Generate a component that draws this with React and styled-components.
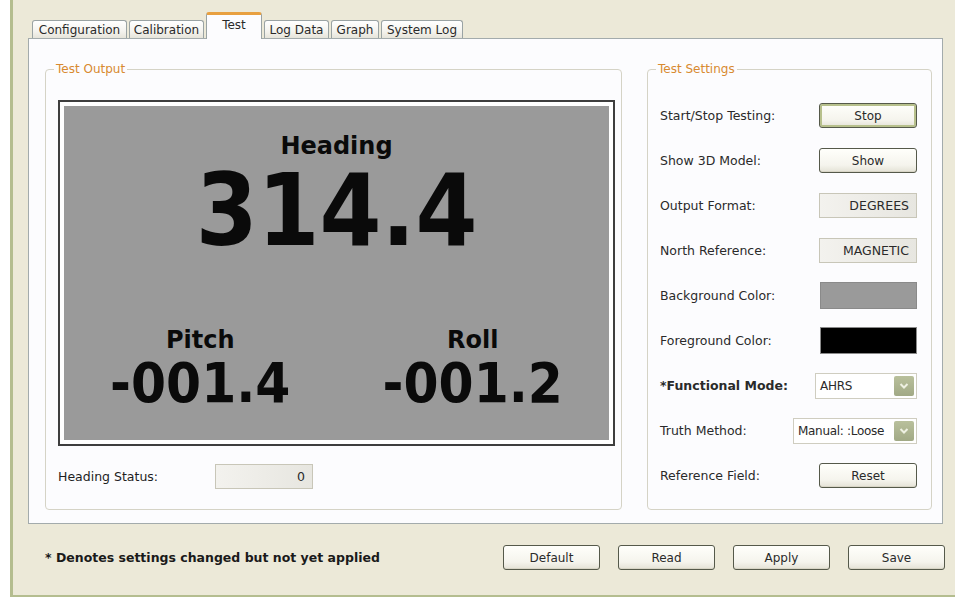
import React from "react";
import styled, { createGlobalStyle } from "styled-components";

const GlobalStyle = createGlobalStyle`
  html, body { margin: 0; padding: 0; background: #ffffff; }
  body {
    font-family: "DejaVu Sans", Verdana, sans-serif;
    font-size: 12.5px;
    color: #1e1e1e;
  }
  * { box-sizing: border-box; }
`;

const Window = styled.div`
  margin-left: 10px;
  width: 945px;
  height: 597px;
  background: #ece9d8;
  border-left: 3px solid #b4bd8f;
  border-bottom: 2px solid #b4bd8f;
  display: flex;
  flex-direction: column;
`;

const TabStrip = styled.div`
  display: flex;
  align-items: flex-end;
  height: 38px;
  padding-left: 19px;
  position: relative;
  z-index: 1;
`;

const Tab = styled.div`
  width: ${(p) => p.$w}px;
  height: ${(p) => (p.$active ? 27 : 18)}px;
  margin-right: 2px;
  margin-bottom: ${(p) => (p.$active ? -1 : 0)}px;
  border: 1px solid #9aa3a4;
  border-bottom: none;
  border-radius: 3px 3px 0 0;
  background: ${(p) =>
    p.$active ? "#fcfcfe" : "linear-gradient(#ffffff, #f4f3ee 60%, #e6e4da)"};
  border-top: ${(p) => (p.$active ? "3px solid #e8a040" : "1px solid #9aa3a4")};
  display: flex;
  justify-content: center;
  align-items: ${(p) => (p.$active ? "flex-start" : "center")};
  padding-top: ${(p) => (p.$active ? 3 : 0)}px;
  font-size: 12px;
  color: #2a2a2a;
  white-space: nowrap;
`;

const TabPage = styled.div`
  margin-left: 15px;
  width: 915px;
  height: 486px;
  border: 1px solid #a3abac;
  background: #fcfcfe;
  display: flex;
  align-items: flex-start;
  gap: 25px;
  padding: 30px 0 0 16px;
`;

const Group = styled.div`
  position: relative;
  width: ${(p) => p.$w}px;
  height: 441px;
  border: 1px solid #d5d3c6;
  border-radius: 4px;
  padding: ${(p) => p.$pad};
`;

const GroupTitle = styled.span`
  position: absolute;
  top: -8px;
  left: 8px;
  padding: 0 2px;
  background: #fcfcfe;
  color: #d88a30;
  font-size: 12px;
  line-height: 14px;
`;

const Display = styled.div`
  width: 557px;
  height: 346px;
  border: 2px solid #3e3e3e;
  background: #ffffff;
  padding: 4px;
`;

const Screen = styled.div`
  height: 100%;
  background: #9a9a9a;
  display: flex;
  flex-direction: column;
  align-items: center;
  padding-top: 28px;
  color: #0a0a0a;
  font-family: "DejaVu Sans", Verdana, sans-serif;
  font-weight: bold;
`;

const ScreenLabel = styled.div`
  font-size: 24px;
  line-height: 1;
`;

const ScreenValue = styled.div`
  font-family: "DejaVu Sans Condensed", "DejaVu Sans", sans-serif;
  font-stretch: condensed;
  font-size: ${(p) => p.$size}px;
  line-height: 0.8;
  margin-top: ${(p) => p.$mt}px;
`;

const AxisPair = styled.div`
  width: 100%;
  display: grid;
  grid-template-columns: 1fr 1fr;
  margin-top: 78px;
`;

const Axis = styled.div`
  display: flex;
  flex-direction: column;
  align-items: center;
`;

const StatusRow = styled.div`
  display: flex;
  align-items: center;
  margin-top: 17px;
  height: 26px;
`;

const StatusLabel = styled.span`
  width: 157px;
`;

const ReadField = styled.div`
  width: ${(p) => p.$w || 98}px;
  height: 25px;
  border: 1px solid #c8c6b8;
  background: linear-gradient(90deg, #f3f2ee, #e7e6e0);
  display: flex;
  align-items: center;
  justify-content: flex-end;
  padding-right: 7px;
  color: #2a2a2a;
`;

const SettingsList = styled.div`
  display: flex;
  flex-direction: column;
`;

const Row = styled.div`
  height: 45px;
  display: flex;
  align-items: center;
  justify-content: space-between;
`;

const RowLabel = styled.span`
  font-weight: ${(p) => (p.$bold ? "bold" : "normal")};
  color: #2a2a2a;
`;

const Button = styled.button`
  width: ${(p) => p.$w || 98}px;
  height: 25px;
  padding: 0;
  border: 1px solid #55594a;
  border-radius: 3px;
  background: linear-gradient(#fffffb, #f5f4ed 70%, #e4e2d6);
  box-shadow: ${(p) =>
    p.$default ? "inset 0 0 0 2px #b7c08c" : "inset 0 -1px 0 #d8d5c6"};
  font-family: "DejaVu Sans", Verdana, sans-serif;
  font-size: 12px;
  color: #2a2a2a;
`;

const Swatch = styled.div`
  width: 97px;
  height: 27px;
  border: 1px solid #8a8a8a;
  background: ${(p) => p.$color};
`;

const Combo = styled.div`
  width: ${(p) => p.$w}px;
  height: 26px;
  border: 1px solid #cfcdc0;
  background: #ffffff;
  display: flex;
  align-items: center;
  padding: 2px;
`;

const ComboText = styled.span`
  flex: 1;
  padding-left: 2px;
  white-space: nowrap;
  overflow: hidden;
  font-size: 12px;
  letter-spacing: -0.3px;
  color: #2a2a2a;
`;

const ComboArrow = styled.div`
  flex: none;
  width: 20px;
  height: 20px;
  border-radius: 2px;
  background: linear-gradient(#b9c09c, #a1a985);
  display: flex;
  align-items: center;
  justify-content: center;
`;

const Footer = styled.div`
  display: flex;
  align-items: flex-start;
  padding: 21px 10px 0 32px;
`;

const Note = styled.span`
  flex: 1;
  line-height: 25px;
  font-weight: bold;
  color: #1a1a1a;
`;

const FooterButtons = styled.div`
  display: flex;
  gap: 18px;
`;

const Chevron = () => (
  <svg width="10" height="8" viewBox="0 0 10 8">
    <path d="M1.5 2 L5 5.5 L8.5 2" fill="none" stroke="#eef0e2" strokeWidth="2" />
  </svg>
);

const tabs = [
  { name: "Configuration", w: 95 },
  { name: "Calibration", w: 75 },
  { name: "Test", w: 56, active: true },
  { name: "Log Data", w: 65 },
  { name: "Graph", w: 48 },
  { name: "System Log", w: 82 },
];

export default function App() {
  return (
    <>
      <GlobalStyle />
      <Window>
        <TabStrip>
          {tabs.map((t) => (
            <Tab key={t.name} $w={t.w} $active={t.active}>
              {t.name}
            </Tab>
          ))}
        </TabStrip>
        <TabPage>
          <Group $w={577} $pad="30px 6px 0 12px">
            <GroupTitle>Test Output</GroupTitle>
            <Display>
              <Screen>
                <ScreenLabel>Heading</ScreenLabel>
                <ScreenValue $size={99} $mt={13}>314.4</ScreenValue>
                <AxisPair>
                  <Axis>
                    <ScreenLabel>Pitch</ScreenLabel>
                    <ScreenValue $size={56} $mt={9}>-001.4</ScreenValue>
                  </Axis>
                  <Axis>
                    <ScreenLabel>Roll</ScreenLabel>
                    <ScreenValue $size={56} $mt={9}>-001.2</ScreenValue>
                  </Axis>
                </AxisPair>
              </Screen>
            </Display>
            <StatusRow>
              <StatusLabel>Heading Status:</StatusLabel>
              <ReadField $w={98}>0</ReadField>
            </StatusRow>
          </Group>
          <Group $w={285} $pad="23px 14px 0 12px">
            <GroupTitle>Test Settings</GroupTitle>
            <SettingsList>
              <Row>
                <RowLabel>Start/Stop Testing:</RowLabel>
                <Button $default>Stop</Button>
              </Row>
              <Row>
                <RowLabel>Show 3D Model:</RowLabel>
                <Button>Show</Button>
              </Row>
              <Row>
                <RowLabel>Output Format:</RowLabel>
                <ReadField>DEGREES</ReadField>
              </Row>
              <Row>
                <RowLabel>North Reference:</RowLabel>
                <ReadField>MAGNETIC</ReadField>
              </Row>
              <Row>
                <RowLabel>Background Color:</RowLabel>
                <Swatch $color="#9a9a9a" />
              </Row>
              <Row>
                <RowLabel>Foreground Color:</RowLabel>
                <Swatch $color="#000000" />
              </Row>
              <Row>
                <RowLabel $bold>*Functional Mode:</RowLabel>
                <Combo $w={102}>
                  <ComboText>AHRS</ComboText>
                  <ComboArrow><Chevron /></ComboArrow>
                </Combo>
              </Row>
              <Row>
                <RowLabel>Truth Method:</RowLabel>
                <Combo $w={124}>
                  <ComboText>Manual: :Loose</ComboText>
                  <ComboArrow><Chevron /></ComboArrow>
                </Combo>
              </Row>
              <Row>
                <RowLabel>Reference Field:</RowLabel>
                <Button>Reset</Button>
              </Row>
            </SettingsList>
          </Group>
        </TabPage>
        <Footer>
          <Note>* Denotes settings changed but not yet applied</Note>
          <FooterButtons>
            <Button $w={97}>Default</Button>
            <Button $w={97}>Read</Button>
            <Button $w={97}>Apply</Button>
            <Button $w={97}>Save</Button>
          </FooterButtons>
        </Footer>
      </Window>
    </>
  );
}
